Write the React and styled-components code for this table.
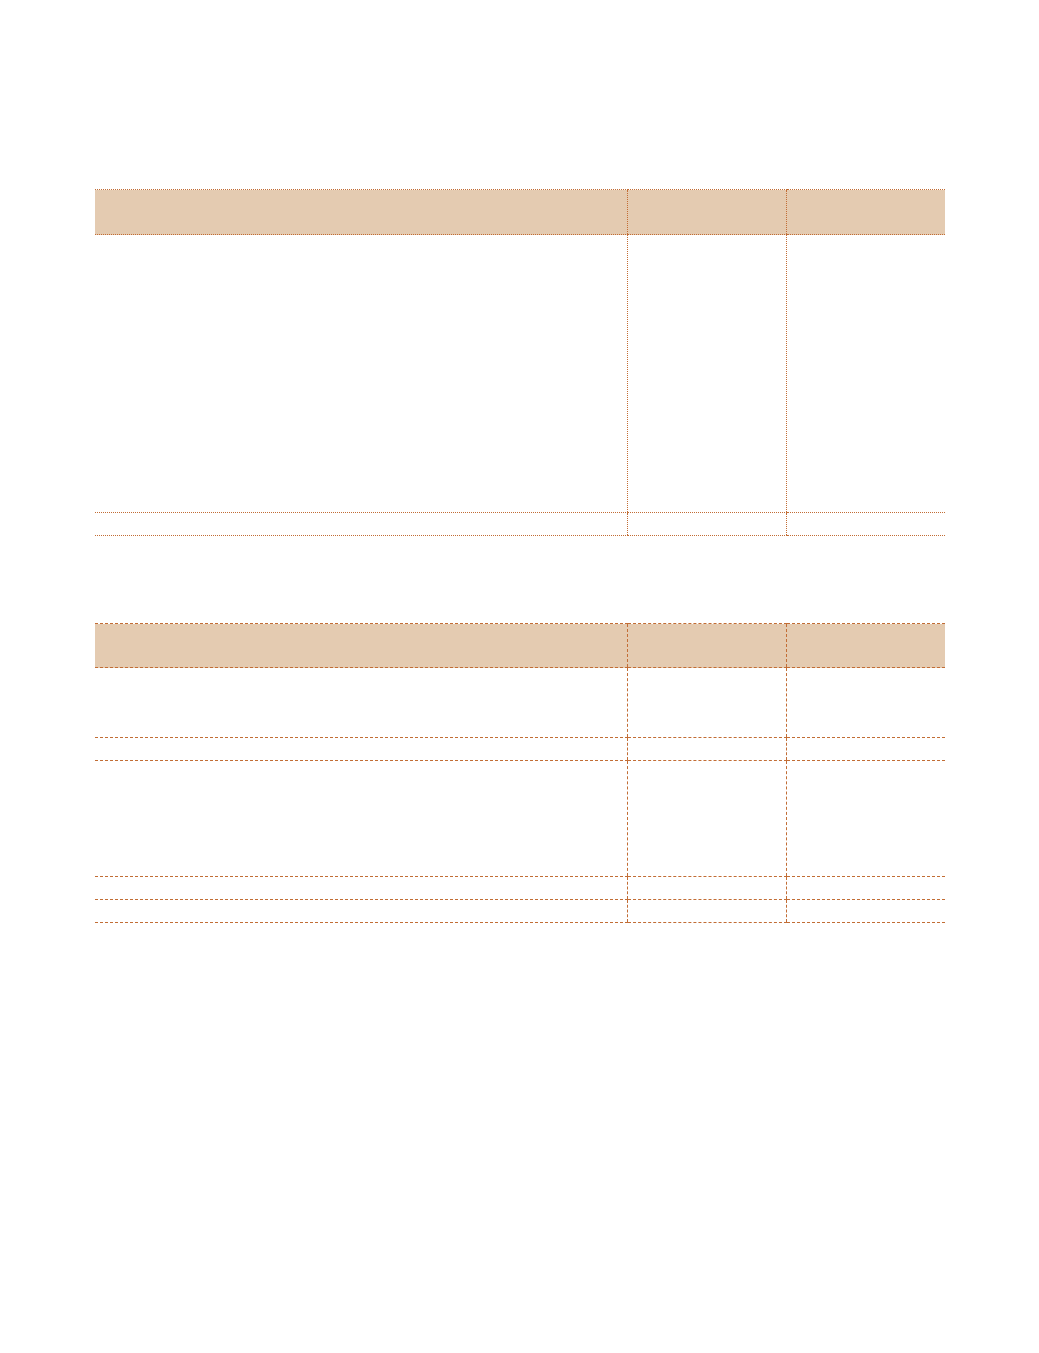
import React from 'react';
import styled, { createGlobalStyle } from 'styled-components';

const GlobalStyle = createGlobalStyle`
  html, body { margin: 0; padding: 0; background: #fff; }
  body { font-family: "Liberation Sans", Arial, sans-serif; }
`;

const Page = styled.div`
  width: 1039px;
  min-height: 1353px;
  padding: 189px 0 0 95px;
  box-sizing: border-box;
`;

const Table = styled.table`
  width: 850px;
  border-collapse: collapse;
  table-layout: fixed;
  margin-bottom: ${(p) => p.gap || 0}px;
  --rule: 1px ${(p) => p.rule || 'dotted'} #c26d35;
`;

const Row = styled.tr`
  height: ${(p) => p.h}px;
  background: ${(p) => (p.head ? '#e4cbb1' : 'transparent')};
`;

const Cell = styled.td`
  padding: 0;
  border-top: var(--rule);
  border-bottom: var(--rule);
  & + & { border-left: var(--rule); }
`;

const widths = [532, 159, 159];

const Cols = () => (
  <colgroup>
    {widths.map((w, i) => <col key={i} style={{ width: w }} />)}
  </colgroup>
);

const Line = ({ h, head }) => (
  <Row h={h} head={head}>
    <Cell /><Cell /><Cell />
  </Row>
);

export default function App() {
  return (
    <Page>
      <GlobalStyle />
      <Table gap={87}>
        <Cols />
        <tbody>
          <Line h={45} head />
          <Line h={278} />
          <Line h={23} />
        </tbody>
      </Table>
      <Table rule="dashed">
        <Cols />
        <tbody>
          <Line h={44} head />
          <Line h={70} />
          <Line h={23} />
          <Line h={116} />
          <Line h={23} />
          <Line h={23} />
        </tbody>
      </Table>
    </Page>
  );
}
